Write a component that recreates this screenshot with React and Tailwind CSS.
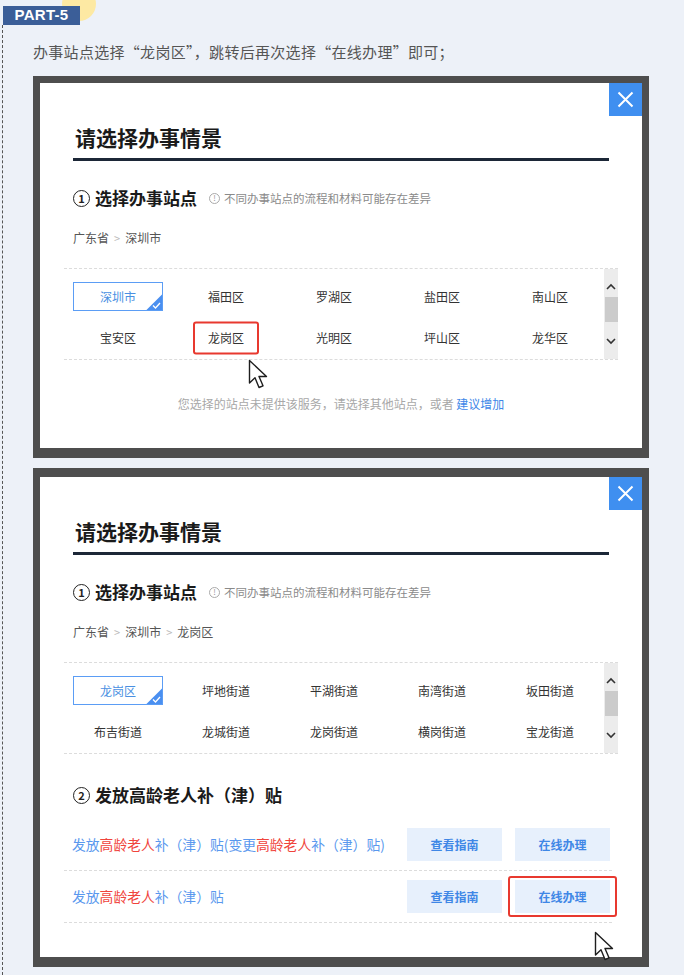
import React from "react";

const CJK = "font-['Noto_Sans_CJK_SC',sans-serif]";

function Cursor({ className }) {
  return (
    <svg className={className} width="22" height="31" viewBox="0 0 22 31">
      <path
        d="M1.5 1.5 L1.5 24 L7 18.8 L11 28.5 L15 26.8 L11 17.5 L18.5 17.5 Z"
        fill="white"
        stroke="#1e1e1e"
        strokeWidth="1.4"
        strokeLinejoin="round"
      />
    </svg>
  );
}

function CloseBtn() {
  return (
    <div className="absolute right-0 top-0 w-[33px] h-[33px] bg-[#3f8ff0] flex items-center justify-center">
      <svg width="17" height="17" viewBox="0 0 17 17">
        <path d="M1.5 1.5 L15.5 15.5 M15.5 1.5 L1.5 15.5" stroke="white" strokeWidth="2" />
      </svg>
    </div>
  );
}

function Circled({ n }) {
  return (
    <span className="inline-flex items-center justify-center w-[17px] h-[17px] rounded-full border-[1.5px] border-[#222] text-[11px] leading-none font-bold text-[#222] mr-[5px]">
      {n}
    </span>
  );
}

function Header({ crumbs }) {
  return (
    <div className="px-[33px] pt-[40px]">
      <div className="text-[21px] font-bold leading-[28px] text-[#1a1a1a] pl-[2px]">请选择办事情景</div>
      <div className="mt-[7px] h-[3px] bg-[#1c2737]" />
      <div className="mt-[25px] flex items-center h-[24px]">
        <Circled n="1" />
        <span className="text-[17px] font-bold text-[#1a1a1a] leading-[24px]">选择办事站点</span>
        <span className="ml-[12px] inline-flex items-center justify-center w-[11px] h-[11px] rounded-full border border-[#aaa] text-[8px] leading-none text-[#999]">!</span>
        <span className="ml-[4px] text-[11.5px] text-[#8a8a8a] leading-[16px]">不同办事站点的流程和材料可能存在差异</span>
      </div>
      <div className="mt-[19px] h-[18px] flex items-center text-[12px] text-[#555] leading-[18px]">
        {crumbs.map((c, i) => (
          <React.Fragment key={c}>
            {i > 0 && <span className="mx-[5px] text-[#bbb] text-[11px]">&gt;</span>}
            <span>{c}</span>
          </React.Fragment>
        ))}
      </div>
    </div>
  );
}

function SelectedBox({ label }) {
  return (
    <div className="relative w-[90px] h-[29px] border border-[#5b9df5] flex items-center justify-center text-[12px] text-[#4a90e2] bg-white">
      {label}
      <div className="absolute right-0 bottom-0 w-[16px] h-[16px] overflow-hidden">
        <div className="absolute right-0 bottom-0 w-[22px] h-[22px] bg-[#4a8ff0] rotate-45 translate-x-[11px] translate-y-[11px]" />
        <svg className="absolute right-[1px] bottom-[1px]" width="9" height="7" viewBox="0 0 9 7">
          <path d="M1 3.5 L3.5 6 L8 1" stroke="white" strokeWidth="1.3" fill="none" />
        </svg>
      </div>
    </div>
  );
}

function Grid({ rows, selected, redIndex }) {
  return (
    <div className="mx-[24px] h-[92px] border-t border-b border-dashed border-[#dcdcdc] flex">
      <div className="w-[540px] pt-[13px] flex flex-col gap-[12px]">
        {rows.map((row, ri) => (
          <div key={ri} className="grid grid-cols-5 h-[29px]">
            {row.map((cell, ci) => (
              <div key={ci} className="relative flex items-center justify-center text-[12px] text-[#333]">
                {ri === 0 && ci === 0 ? (
                  <SelectedBox label={selected} />
                ) : (
                  <span>{cell}</span>
                )}
                {redIndex && redIndex[0] === ri && redIndex[1] === ci && (
                  <div className="absolute left-1/2 top-1/2 -translate-x-1/2 -translate-y-1/2 w-[66px] h-[33px] border-2 border-[#e8392f] rounded-[3px]" />
                )}
              </div>
            ))}
          </div>
        ))}
      </div>
      <div className="w-[14px] bg-[#ececec] flex flex-col items-center">
        <svg className="mt-[14px]" width="10" height="7" viewBox="0 0 10 7">
          <path d="M1 6 L5 2 L9 6" stroke="#333" strokeWidth="1.6" fill="none" />
        </svg>
        <div className="mt-[7px] w-[13px] h-[25px] bg-[#cbcbcb]" />
        <svg className="mt-[16px]" width="10" height="7" viewBox="0 0 10 7">
          <path d="M1 1 L5 5 L9 1" stroke="#333" strokeWidth="1.6" fill="none" />
        </svg>
      </div>
    </div>
  );
}

function ServiceName({ variant }) {
  const R = ({ children }) => <span className="text-[#f0443c]">{children}</span>;
  return (
    <span className="text-[13.8px] text-[#5a98ee]">
      发放<R>高龄老人</R>补（津）贴
      {variant && (
        <>
          (变更<R>高龄老人</R>补（津）贴)
        </>
      )}
    </span>
  );
}

function Btn({ children }) {
  return (
    <div className="w-[95px] h-[33px] bg-[#e7f0fc] flex items-center justify-center text-[12px] font-bold text-[#3f87e6]">
      {children}
    </div>
  );
}

export default function App() {
  return (
    <div className={`relative w-[684px] h-[975px] bg-[#edf1f8] overflow-hidden ${CJK}`}>
      <div className="absolute left-[62px] top-[-13px] w-[34px] h-[34px] rounded-full bg-[#fde9a3]" />
      <div className="relative ml-[3px] mt-[6px] w-[77px] h-[19px] bg-[#3b5e98] flex items-center justify-center text-white font-bold text-[15px] font-['Liberation_Sans',sans-serif] tracking-[0.3px]">
        PART-5
      </div>
      <div className="ml-[2px] h-[950px] border-l border-dashed border-[#555] pl-[30px]">
        <div className="pt-[17px] text-[15px] tracking-[0.3px] leading-[20px] text-[#555]">
          办事站点选择“龙岗区”，跳转后再次选择“在线办理”即可；
        </div>

        {/* Panel 1 */}
        <div className="relative mt-[14px] w-[616px] border-[7px] border-b-[10px] border-[#4e4e4e]">
          <div className="relative h-[365px] bg-white">
            <CloseBtn />
            <Header crumbs={["广东省", "深圳市"]} />
            <div className="mt-[21px]">
              <Grid
                selected="深圳市"
                redIndex={[1, 1]}
                rows={[
                  ["深圳市", "福田区", "罗湖区", "盐田区", "南山区"],
                  ["宝安区", "龙岗区", "光明区", "坪山区", "龙华区"],
                ]}
              />
            </div>
            <div className="mt-[36px] text-center text-[12px] leading-[16px] text-[#a8a8a8]">
              您选择的站点未提供该服务，请选择其他站点，或者 <span className="text-[#3d87e8]">建议增加</span>
            </div>
          </div>
          <Cursor className="absolute left-[208px] top-[276px]" />
        </div>

        {/* Panel 2 */}
        <div className="relative mt-[10px] w-[616px] border-[7px] border-t-[9px] border-b-[10px] border-[#4e4e4e]">
          <div className="relative h-[480px] bg-white">
            <CloseBtn />
            <Header crumbs={["广东省", "深圳市", "龙岗区"]} />
            <div className="mt-[21px]">
              <Grid
                selected="龙岗区"
                rows={[
                  ["龙岗区", "坪地街道", "平湖街道", "南湾街道", "坂田街道"],
                  ["布吉街道", "龙城街道", "龙岗街道", "横岗街道", "宝龙街道"],
                ]}
              />
            </div>
            <div className="mt-[29px] px-[33px] flex items-center h-[24px]">
              <Circled n="2" />
              <span className="text-[17px] font-bold text-[#1a1a1a] leading-[24px]">发放高龄老人补（津）贴</span>
            </div>
            <div className="ml-[24px] mr-[30px] mt-[12px]">
              <div className="h-[52px] border-b border-dashed border-[#dcdcdc] flex items-center pl-[8px] pr-[2px]">
                <ServiceName variant />
                <div className="ml-auto flex gap-[13px]">
                  <Btn>查看指南</Btn>
                  <Btn>在线办理</Btn>
                </div>
              </div>
              <div className="h-[52px] border-b border-dashed border-[#dcdcdc] flex items-center pl-[8px] pr-[2px]">
                <ServiceName />
                <div className="ml-auto flex gap-[13px]">
                  <Btn>查看指南</Btn>
                  <div className="relative">
                    <Btn>在线办理</Btn>
                    <div className="absolute -left-[7px] -right-[7px] -top-[4px] -bottom-[4px] border-2 border-[#e8392f] rounded-[3px]" />
                  </div>
                </div>
              </div>
            </div>
          </div>
          <Cursor className="absolute left-[554px] top-[454px]" />
        </div>
      </div>
    </div>
  );
}
